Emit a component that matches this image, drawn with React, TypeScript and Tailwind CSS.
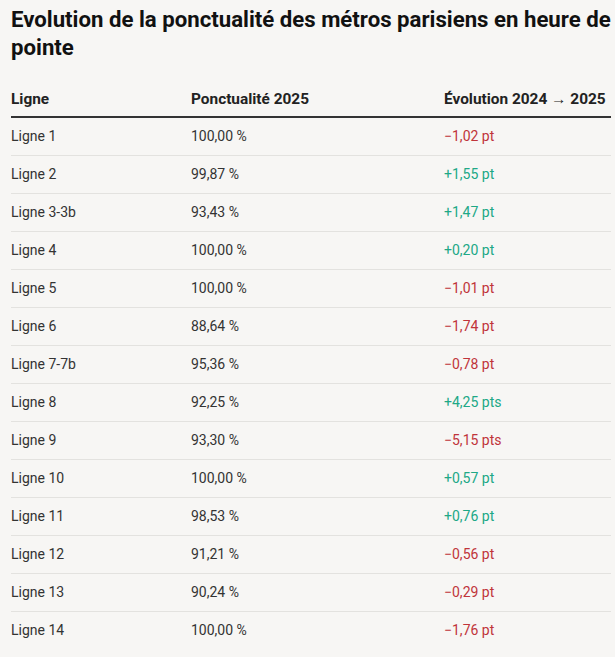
const ROWS = [
  { ligne: "Ligne 1", ponct: "100,00 %", evo: "−1,02 pt", up: false },
  { ligne: "Ligne 2", ponct: "99,87 %", evo: "+1,55 pt", up: true },
  { ligne: "Ligne 3-3b", ponct: "93,43 %", evo: "+1,47 pt", up: true },
  { ligne: "Ligne 4", ponct: "100,00 %", evo: "+0,20 pt", up: true },
  { ligne: "Ligne 5", ponct: "100,00 %", evo: "−1,01 pt", up: false },
  { ligne: "Ligne 6", ponct: "88,64 %", evo: "−1,74 pt", up: false },
  { ligne: "Ligne 7-7b", ponct: "95,36 %", evo: "−0,78 pt", up: false },
  { ligne: "Ligne 8", ponct: "92,25 %", evo: "+4,25 pts", up: true },
  { ligne: "Ligne 9", ponct: "93,30 %", evo: "−5,15 pts", up: false },
  { ligne: "Ligne 10", ponct: "100,00 %", evo: "+0,57 pt", up: true },
  { ligne: "Ligne 11", ponct: "98,53 %", evo: "+0,76 pt", up: true },
  { ligne: "Ligne 12", ponct: "91,21 %", evo: "−0,56 pt", up: false },
  { ligne: "Ligne 13", ponct: "90,24 %", evo: "−0,29 pt", up: false },
  { ligne: "Ligne 14", ponct: "100,00 %", evo: "−1,76 pt", up: false },
];

export default function App() {
  return (
    <div className="min-h-screen overflow-hidden bg-[#f7f6f4] text-[#222] font-['Roboto',sans-serif]">
      <div className="w-[600px] ml-[11px] pt-[6px]">
        <h1 className="w-[604px] text-[22.2px] leading-[27.5px] tracking-normal font-bold text-[#111]">
          Evolution de la ponctualité des métros parisiens en heure de pointe
        </h1>

        {/* table */}
        <table className="mt-[18px] w-full border-collapse text-[14px] leading-[21px]">
          <thead>
            <tr className="border-b-2 border-[#333] text-[15.4px]">
              <th className="w-[180px] pt-[10px] pb-[6px] text-left font-bold text-[#222]">Ligne</th>
              <th className="w-[253px] pt-[10px] pb-[6px] text-left font-bold text-[#222]">Ponctualité 2025</th>
              <th className="pt-[10px] pb-[6px] text-left font-bold text-[#222]">Évolution 2024 → 2025</th>
            </tr>
          </thead>
          <tbody>
            {ROWS.map((r, i) => (
              <tr
                key={r.ligne}
                className={i < ROWS.length - 1 ? "border-b border-[#e3e2df]" : ""}
              >
                <td className="py-2 text-[#333]">{r.ligne}</td>
                <td className="py-2 text-[#333]">{r.ponct}</td>
                <td className={r.up ? "py-2 text-[#20a886]" : "py-2 text-[#c0343a]"}>{r.evo}</td>
              </tr>
            ))}
          </tbody>
        </table>
      </div>
    </div>
  );
}
